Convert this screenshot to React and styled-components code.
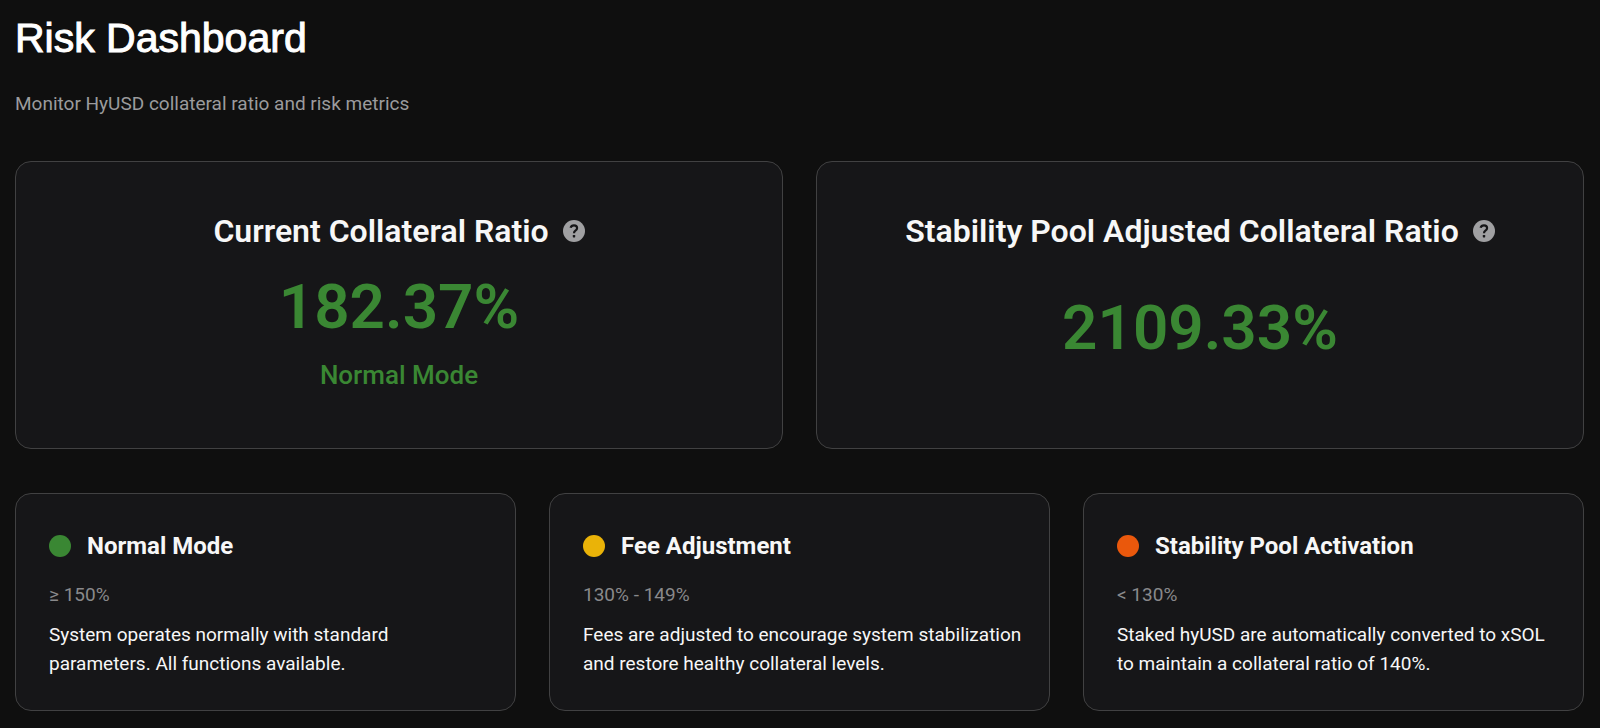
import styled, { createGlobalStyle } from "styled-components";

const GlobalStyle = createGlobalStyle`
  * {
    box-sizing: border-box;
  }

  body {
    margin: 0;
    background: #0f0f0f;
    color: #f7f7f7;
    font-family: Roboto, "Liberation Sans", sans-serif;
  }

  h1, h2, h3, p {
    margin: 0;
  }
`;

const Page = styled.main`
  padding: 12px 16px 18px 15px;
`;

const PageTitle = styled.h1`
  font-family: "Liberation Sans", Arial, sans-serif;
  font-size: 41px;
  font-weight: 400;
  line-height: 52px;
  color: #fff;
  -webkit-text-stroke: 1px #fff;
`;

const Subtitle = styled.p`
  margin-top: 24px;
  font-size: 19px;
  line-height: 32px;
  color: #9b9b9d;
`;

const Grid = styled.section`
  display: grid;
  grid-template-columns: repeat(${({ $columns }) => $columns}, minmax(0, 1fr));
  gap: 33px;
  margin-top: ${({ $top }) => $top}px;
`;

const Card = styled.article`
  display: flex;
  flex-direction: column;
  padding: ${({ $padding }) => $padding};
  background: #161618;
  border: 1px solid #414142;
  border-radius: 16px;
`;

const RatioHeader = styled.div`
  display: flex;
  align-items: center;
  justify-content: center;
  gap: 14px;
`;

const RatioTitle = styled.h2`
  font-size: 32px;
  font-weight: 600;
  line-height: 42px;
`;

const HelpButton = styled.button`
  display: flex;
  padding: 0;
  border: 0;
  background: none;
  color: #a0a0a2;
  cursor: pointer;
`;

const RatioBody = styled.div`
  display: flex;
  flex: 1;
  flex-direction: column;
  justify-content: center;
  margin-top: 8px;
  text-align: center;
  color: #3a8733;
`;

const RatioValue = styled.p`
  font-size: 62px;
  font-weight: 600;
  line-height: 94px;
`;

const RatioMode = styled.p`
  font-size: 26px;
  font-weight: 500;
  line-height: 42px;
`;

const ModeHeader = styled.div`
  display: flex;
  align-items: center;
  gap: 16px;
`;

const Dot = styled.span`
  width: 22px;
  height: 22px;
  border-radius: 50%;
  background: ${({ $color }) => $color};
`;

const ModeTitle = styled.h3`
  font-size: 24px;
  font-weight: 700;
  line-height: 36px;
`;

const ModeRange = styled.p`
  margin-top: 16px;
  font-size: 19px;
  line-height: 29px;
  color: #89898b;
`;

const ModeText = styled.p`
  margin-top: 11px;
  font-size: 19px;
  line-height: 29px;
`;

const ratios = [
  { title: "Current Collateral Ratio", value: "182.37%", mode: "Normal Mode" },
  { title: "Stability Pool Adjusted Collateral Ratio", value: "2109.33%" },
];

const modes = [
  {
    title: "Normal Mode",
    color: "#3a8733",
    range: "≥ 150%",
    text: "System operates normally with standard parameters. All functions available.",
  },
  {
    title: "Fee Adjustment",
    color: "#eab308",
    range: "130% - 149%",
    text: "Fees are adjusted to encourage system stabilization and restore healthy collateral levels.",
  },
  {
    title: "Stability Pool Activation",
    color: "#ea580c",
    range: "< 130%",
    text: "Staked hyUSD are automatically converted to xSOL to maintain a collateral ratio of 140%.",
  },
];

function HelpIcon() {
  return (
    <svg width="22" height="22" viewBox="0 0 22 22" fill="none" aria-hidden="true">
      <circle cx="11" cy="11" r="11" fill="currentColor" />
      <path
        d="M7.6 7.8C8 6.1 9.2 5.3 11 5.3C12.9 5.3 14.1 6.4 14.1 8C14.1 9.3 13.4 10 12.4 10.7C11.4 11.4 11 11.9 11 13.2"
        stroke="#161618"
        strokeWidth="2.2"
      />
      <rect x="9.8" y="15" width="2.4" height="2.4" rx="0.6" fill="#161618" />
    </svg>
  );
}

function RatioCard({ title, value, mode }) {
  return (
    <Card $padding="48px 32px 52px">
      <RatioHeader>
        <RatioTitle>{title}</RatioTitle>
        <HelpButton type="button" aria-label={`About ${title}`}>
          <HelpIcon />
        </HelpButton>
      </RatioHeader>
      <RatioBody>
        <RatioValue>{value}</RatioValue>
        {mode && <RatioMode>{mode}</RatioMode>}
      </RatioBody>
    </Card>
  );
}

function ModeCard({ title, color, range, text }) {
  return (
    <Card $padding="34px 24px 32px 33px">
      <ModeHeader>
        <Dot $color={color} />
        <ModeTitle>{title}</ModeTitle>
      </ModeHeader>
      <ModeRange>{range}</ModeRange>
      <ModeText>{text}</ModeText>
    </Card>
  );
}

function App() {
  return (
    <Page>
      <GlobalStyle />
      <header>
        <PageTitle>Risk Dashboard</PageTitle>
        <Subtitle>Monitor HyUSD collateral ratio and risk metrics</Subtitle>
      </header>
      <Grid $columns={2} $top={41}>
        {ratios.map((ratio) => (
          <RatioCard key={ratio.title} {...ratio} />
        ))}
      </Grid>
      <Grid $columns={3} $top={44}>
        {modes.map((mode) => (
          <ModeCard key={mode.title} {...mode} />
        ))}
      </Grid>
    </Page>
  );
}

export default App;
